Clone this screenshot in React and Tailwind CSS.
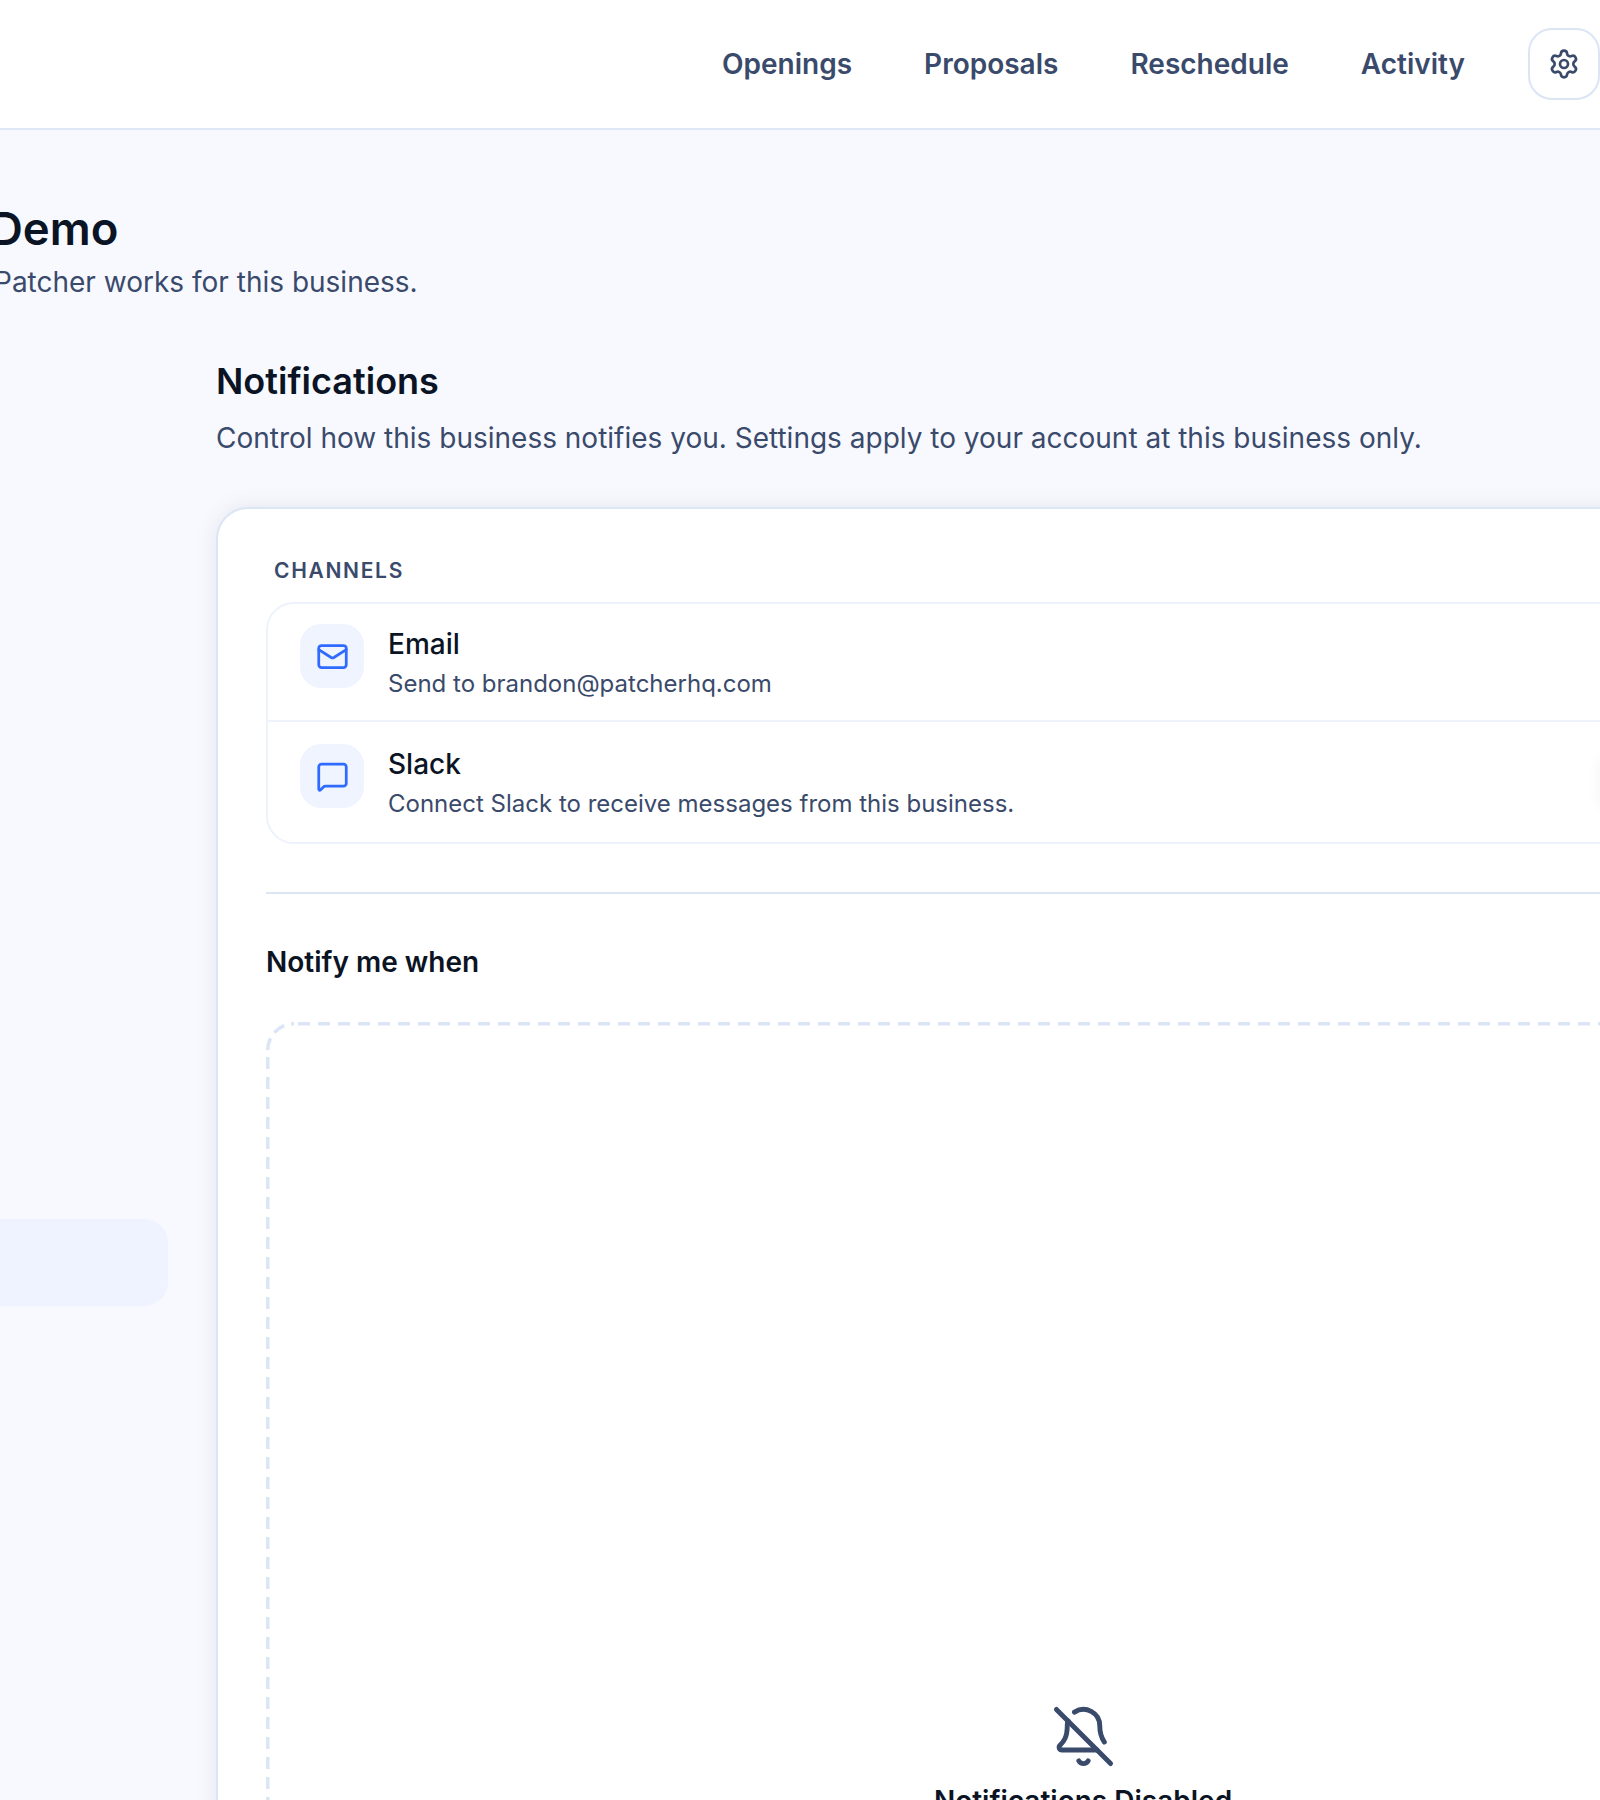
import React from 'react';
import { Settings, Mail, MessageSquare, BellOff } from 'lucide-react';

const navLinks = ['Openings', 'Proposals', 'Reschedule', 'Activity'];

const Header = () => (
    <header className="h-[130px] bg-white border-b-2 border-[#dfe7f6] flex items-center justify-end">
        <nav className="flex items-center gap-[72px]">
            {navLinks.map((link) => (
                <a key={link} className="text-[28px] leading-[40px] font-semibold text-[#3a4a6b]">
                    {link}
                </a>
            ))}
        </nav>
        <button className="ml-[63px] w-[72px] h-[72px] rounded-[24px] border-2 border-[#dbe5f5] bg-white flex items-center justify-center text-[#3a4a6b]">
            <Settings size={32} strokeWidth={2} />
        </button>
    </header>
);

const ChannelRow = ({ icon: Icon, title, description, className, action }) => (
    <div className={`flex items-start pl-[32px] ${className}`}>
        <div className="w-[64px] h-[64px] shrink-0 rounded-[21px] bg-[#eff4ff] flex items-center justify-center text-[#2f6bff]">
            <Icon size={33} strokeWidth={2} />
        </div>
        <div className="ml-[24px] w-[1212px] shrink-0 pt-[1px]">
            <div className="text-[28px] leading-[38px] font-medium text-[#0b1424]">{title}</div>
            <div className="mt-[3px] text-[24px] leading-[35px] text-[#3a4a6b]">{description}</div>
        </div>
        {action}
    </div>
);

// Chrome's own dashed border can't give the 12/8 dash at this width
const DashedEdge = () => (
    <svg className="absolute inset-0 w-full h-full pointer-events-none" fill="none" stroke="#dbe5f5" strokeWidth="3.5" aria-hidden="true">
        <path d="M30 1.75H1640" strokeDasharray="12 8" strokeDashoffset="-2" />
        <path d="M1.75 28A26.25 26.25 0 0 1 28 1.75" strokeDasharray="12 7" />
        <path d="M1.75 35V900" strokeDasharray="12 8" />
    </svg>
);

export default function App() {
    return (
        <div className="w-[1600px] h-[1800px] overflow-hidden bg-[#f8f9ff] font-[Inter,sans-serif]">
            <Header />

            <main className="pt-[73px]">
                {/* Page title, cut off by the left edge */}
                <h1 className="-ml-[10px] text-[45.5px] leading-[52px] font-semibold text-[#0b1424] whitespace-nowrap">
                    Demo
                </h1>
                <p className="-ml-[6px] mt-[6px] text-[28px] leading-[42px] text-[#3a4a6b] whitespace-nowrap">
                    Patcher works for this business.
                </p>

                <div className="flex mt-[56px]">
                    {/* Sidebar */}
                    <aside className="w-[168px] shrink-0 pt-[860px]">
                        <div className="h-[87px] rounded-r-[24px] bg-[#eef3ff]"></div>
                    </aside>

                    <section className="ml-[48px] w-[1734px] shrink-0">
                        <h2 className="text-[36px] leading-[44px] font-semibold text-[#0b1424]">Notifications</h2>
                        <p className="mt-[14px] text-[28px] leading-[42px] text-[#3a4a6b] whitespace-nowrap">
                            Control how this business notifies you. Settings apply to your account at this business only.
                        </p>

                        <div className="mt-[48px] rounded-[32px] border-2 border-[#dbe5f5] bg-white px-[48px] pt-[48px] shadow-[0_0_24px_rgba(15,23,42,0.08)]">
                            <div className="ml-[8px] text-[21px] leading-[28px] font-semibold tracking-[0.08em] text-[#3a4a6b]">
                                CHANNELS
                            </div>

                            <div className="mt-[17px] rounded-[28px] border-2 border-[#eef2fb] overflow-hidden">
                                <ChannelRow
                                    icon={Mail}
                                    title="Email"
                                    description="Send to brandon@patcherhq.com"
                                    className="pt-[20px] pb-[19px]"
                                />
                                <ChannelRow
                                    icon={MessageSquare}
                                    title="Slack"
                                    description="Connect Slack to receive messages from this business."
                                    className="border-t-2 border-[#eef2fb] pt-[22px] pb-[21px]"
                                    action={
                                        <button className="w-[200px] h-[64px] shrink-0 mt-[6px] rounded-[20px] bg-white shadow-[0_0_16px_rgba(0,0,0,0.05)]"></button>
                                    }
                                />
                            </div>

                            <div className="mt-[48px] h-[2px] bg-[#dbe5f5]"></div>

                            <h3 className="mt-[48px] text-[28px] leading-[40px] font-semibold text-[#0b1424]">Notify me when</h3>

                            <div className="relative mt-[40px] pt-[682px] pb-[80px] flex flex-col items-center">
                                <DashedEdge />
                                <BellOff size={65} strokeWidth={1.8} className="text-[#3a4a6b]" />
                                <div className="mt-[12px] text-[28px] leading-[40px] font-semibold text-[#0b1424]">
                                    Notifications Disabled
                                </div>
                            </div>
                        </div>
                    </section>
                </div>
            </main>
        </div>
    );
}
